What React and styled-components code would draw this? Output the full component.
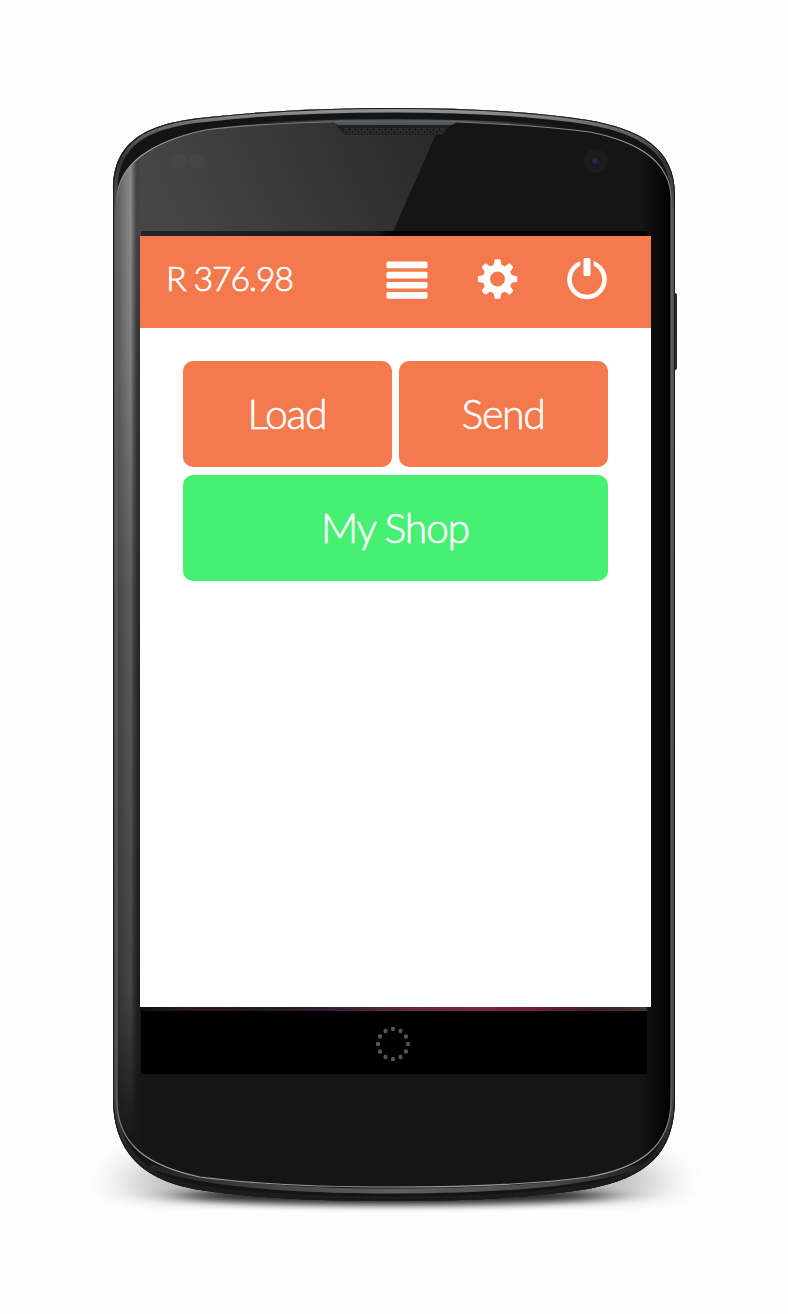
import React from 'react';
import styled, { createGlobalStyle } from 'styled-components';

const GlobalStyle = createGlobalStyle`
  * { box-sizing: border-box; }
  body { margin: 0; background: #fefefe; }
`;

const Stage = styled.main`
  position: relative;
  width: 788px;
  height: 1314px;
  padding: 231px 0 0 140px;
  overflow: hidden;
  font-family: Lato, 'Liberation Sans', sans-serif;
`;

const Device = styled.svg`
  position: absolute;
  inset: 0;
`;

const Screen = styled.section`
  position: relative;
  width: 511px;
  display: flex;
  flex-direction: column;
`;

const StatusBar = styled.div`
  height: 5px;
  width: 506px;
  margin-left: 1px;
  background: linear-gradient(90deg, #242424 0%, #161616 46%, #000 50%);
`;

const Header = styled.header`
  height: 92px;
  background: #f4794d;
  display: flex;
  align-items: center;
  justify-content: space-between;
  padding: 0 44px 6px 26px;
`;

const Balance = styled.div`
  padding-bottom: 2px;
  color: #fff;
  font-size: 34px;
  font-weight: 300;
  line-height: 40px;
  letter-spacing: -1.2px;
  -webkit-text-stroke: 0.7px #fff;
  white-space: nowrap;
`;

const Actions = styled.nav`
  display: flex;
  align-items: center;
  gap: 48.5px;
`;

const IconButton = styled.button`
  display: flex;
  padding: 0;
  border: 0;
  background: none;
`;

const Content = styled.div`
  height: 679px;
  padding: 33px 43px 0;
  background: #fff;
  display: grid;
  grid-template-columns: 1fr 1fr;
  grid-auto-rows: 105.5px;
  gap: 8.5px 7px;
  align-content: start;
`;

const Tile = styled.button`
  grid-column: ${(p) => (p.$wide ? 'span 2' : 'auto')};
  border: 0;
  border-radius: 10px;
  padding: 0 1px 0 0;
  background: ${(p) => (p.$wide ? '#47f073' : '#f4794d')};
  color: #fff;
  font-family: inherit;
  font-size: 41px;
  font-weight: 300;
  line-height: 48px;
  letter-spacing: -1.3px;
  -webkit-text-stroke: 0.6px #fff;
`;

const Wallpaper = styled.div`
  width: 507px;
  height: 4px;
  background: linear-gradient(90deg, #04141a 0%, #2b1a18 9%, #261a25 25%, #351e35 38%, #62283d 52%, #77283a 66%, #702335 77%, #451e27 88%, #403528 100%);
`;

const NavBar = styled.footer`
  width: 506px;
  height: 63px;
  margin-left: 1px;
  padding: 2px 2px 0 0;
  background: #000;
  display: flex;
  align-items: center;
  justify-content: center;
`;

const OUTER =
  'M113 190C113 140 148 124 200 118C260 111 325 108 394 108C463 108 530 111 588 120C640 129 675 148 675 195V1098C675 1155 645 1178 588 1189C530 1198 463 1201 394 1201C325 1201 260 1199 200 1190C150 1182 113 1158 113 1098Z';
const GLASS =
  'M117 199C118 165 150 142 205 130C240 125 285 123 330 122H458C510 124 550 127 590 132C640 142 671 162 671 199V1100C671 1147 640 1168 588 1177C530 1185 463 1187 394 1187C325 1187 260 1185 200 1177C148 1166 117 1145 117 1100Z';

function Phone() {
  return (
    <Device width="788" height="1314" viewBox="0 0 788 1314" fill="none" aria-hidden="true">
      <defs>
        <filter id="soft" filterUnits="userSpaceOnUse" x="20" y="1050" width="750" height="220">
          <feGaussianBlur stdDeviation="22 18" />
        </filter>
        <filter id="tight" filterUnits="userSpaceOnUse" x="20" y="1100" width="750" height="170">
          <feGaussianBlur stdDeviation="24 3.5" />
        </filter>
        <filter id="bevel" filterUnits="userSpaceOnUse" x="90" y="90" width="610" height="1130">
          <feGaussianBlur stdDeviation=".7" />
        </filter>
        <linearGradient id="floor" x1="0" y1="1194" x2="0" y2="1211" gradientUnits="userSpaceOnUse">
          <stop offset="0" stopColor="#fff" />
          <stop offset="1" stopColor="#000" />
        </linearGradient>
        <mask id="floorMask" maskUnits="userSpaceOnUse" x="0" y="1000" width="788" height="300">
          <rect y="1000" width="788" height="300" fill="url(#floor)" />
        </mask>
        <linearGradient id="band" x1="0" y1="108" x2="0" y2="1201" gradientUnits="userSpaceOnUse">
          <stop offset="0" stopColor="#999" />
          <stop offset=".015" stopColor="#6c6c6c" />
          <stop offset=".05" stopColor="#333" />
          <stop offset=".1" stopColor="#5a5a5a" />
          <stop offset=".9" stopColor="#4a4a4a" />
          <stop offset=".95" stopColor="#262626" />
          <stop offset="1" stopColor="#191919" />
        </linearGradient>
        <linearGradient id="lowerBand" x1="150" x2="640" y1="0" y2="0" gradientUnits="userSpaceOnUse">
          <stop offset="0" stopColor="#222" />
          <stop offset=".3" stopColor="#4a4b4c" />
          <stop offset=".5" stopColor="#5c5f61" />
          <stop offset=".8" stopColor="#4a4b4c" />
          <stop offset="1" stopColor="#222" />
        </linearGradient>
        <linearGradient id="upperBand" x1="250" x2="560" y1="0" y2="0" gradientUnits="userSpaceOnUse">
          <stop offset="0" stopColor="#50555a" stopOpacity="0" />
          <stop offset=".3" stopColor="#50555a" />
          <stop offset=".7" stopColor="#50555a" />
          <stop offset="1" stopColor="#50555a" stopOpacity="0" />
        </linearGradient>
        <linearGradient id="rim" x1="0" y1="120" x2="0" y2="1190" gradientUnits="userSpaceOnUse">
          <stop offset="0" stopColor="#70757b" />
          <stop offset=".03" stopColor="#aaa" />
          <stop offset=".08" stopColor="#666" />
          <stop offset=".9" stopColor="#5c5e60" />
          <stop offset=".97" stopColor="#999" />
          <stop offset="1" stopColor="#999" />
        </linearGradient>
        <linearGradient id="gloss" x1="430" y1="140" x2="180" y2="250" gradientUnits="userSpaceOnUse">
          <stop offset="0" stopColor="#2a2a2a" />
          <stop offset="1" stopColor="#464646" />
        </linearGradient>
        <linearGradient id="edge" x1="0" y1="200" x2="0" y2="1100" gradientUnits="userSpaceOnUse">
          <stop offset="0" stopColor="#464646" />
          <stop offset=".2" stopColor="#2e2e2e" />
          <stop offset="1" stopColor="#171717" />
        </linearGradient>
        <linearGradient id="side" x1="117" x2="140" y1="0" y2="0" gradientUnits="userSpaceOnUse">
          <stop offset="0" stopColor="#5c5c5c" />
          <stop offset=".25" stopColor="#737373" />
          <stop offset=".6" stopColor="#8c8c8c" />
          <stop offset=".85" stopColor="#444" stopOpacity=".6" />
          <stop offset="1" stopColor="#333" stopOpacity="0" />
        </linearGradient>
        <linearGradient id="sideFade" x1="0" y1="150" x2="0" y2="1140" gradientUnits="userSpaceOnUse">
          <stop offset="0" stopColor="#fff" />
          <stop offset=".2" stopColor="#ddd" />
          <stop offset=".45" stopColor="#888" />
          <stop offset=".85" stopColor="#606060" />
          <stop offset="1" stopColor="#000" />
        </linearGradient>
        <linearGradient id="right" x1="640" x2="671" y1="0" y2="0" gradientUnits="userSpaceOnUse">
          <stop offset="0" stopColor="#000" stopOpacity="0" />
          <stop offset="1" stopColor="#000" />
        </linearGradient>
        <pattern id="mesh" y="128" width="6" height="5.400" patternUnits="userSpaceOnUse">
          <rect width="6" height="5.400" fill="#2b2b2b" />
          <circle cx="1.500" cy="1.300" r=".9" fill="#0c0c0c" />
          <circle cx="4.500" cy="4" r=".9" fill="#0c0c0c" />
        </pattern>
        <mask id="fade" maskUnits="userSpaceOnUse" x="110" y="100" width="40" height="1110">
          <rect x="110" y="100" width="40" height="1110" fill="url(#sideFade)" />
        </mask>
        <clipPath id="bodyClip"><path d={OUTER} /></clipPath>
        <clipPath id="glassClip"><path d={GLASS} /></clipPath>
      </defs>
      <g mask="url(#floorMask)">
        <ellipse cx="394" cy="1182" rx="275" ry="26" fill="#000" opacity=".4" filter="url(#soft)" />
      </g>
      <ellipse cx="394" cy="1196" rx="215" ry="9" fill="#000" opacity=".8" filter="url(#tight)" />
      <rect x="673" y="293" width="4" height="77" rx="2" fill="#292929" />
      <path d={OUTER} fill="#141414" />
      <g clipPath="url(#bodyClip)">
        <path d={OUTER} stroke="url(#band)" strokeWidth="9" filter="url(#bevel)" />
        <path d={OUTER} stroke="#1c1c1c" strokeWidth="2.200" />
        <path d="M150 1166C200 1184 290 1191 394 1191C500 1191 590 1184 640 1166" stroke="url(#lowerBand)" strokeWidth="5" filter="url(#bevel)" />
      </g>
      <path d="M250 124.500C310 120.500 350 120.500 394 120.500C450 120.500 500 121.500 560 127" stroke="url(#upperBand)" strokeWidth="2.600" />
      <path d={GLASS} fill="#151515" />
      <g clipPath="url(#glassClip)">
        <path d="M110 100H451L391 236H110Z" fill="url(#gloss)" />
        <path d="M117 236H141V1190H117Z" fill="url(#edge)" />
        <path d="M117 130H140V1190H117Z" fill="url(#side)" mask="url(#fade)" />
        <path d="M640 120H672V1190H640Z" fill="url(#right)" />
      </g>
      <path d={GLASS} stroke="url(#rim)" strokeWidth="1.200" />
      <path d="M331 122H458Q452 123 448 128L443 135H345L338 127Q335 123 331 122Z" fill="#1d1e1f" />
      <path d="M332 122H457L452 125H338Z" fill="#50565d" />
      <path d="M341 128H447L442 134.500H346Z" fill="url(#mesh)" />
      <circle cx="178.500" cy="161" r="8" fill="#505050" opacity=".3" />
      <circle cx="197" cy="161" r="8" fill="#505050" opacity=".3" />
      <circle cx="595.500" cy="161" r="12" fill="#1c1c1d" />
      <circle cx="595.500" cy="161" r="6" fill="#1a1a22" />
      <circle cx="595" cy="161" r="2.500" fill="#29284a" />
    </Device>
  );
}

function MenuIcon() {
  return (
    <svg width="42" height="40" viewBox="0 0 42 40" fill="#fff">
      {[2.5, 12.7, 22.9, 33.1].map((y) => (
        <rect key={y} x=".5" y={y} width="41" height="6.7" rx="1.5" />
      ))}
    </svg>
  );
}

function GearIcon() {
  return (
    <svg width="42" height="40" viewBox="-20.5 -20 42 40">
      <g fill="#fff">
        <path fillRule="evenodd" d="M0-14.500A14.500 14.500 0 1 1 0 14.500A14.500 14.500 0 1 1 0-14.500ZM0-7.500A7.500 7.500 0 1 0 0 7.500A7.500 7.500 0 1 0 0-7.500Z" />
        {[0, 45, 90, 135, 180, 225, 270, 315].map((a) => (
          <path key={a} transform={`rotate(${a})`} d="M-4.500-13Q-3.400-15-3-18.700Q-2.800-19.700-1.800-19.700H1.800Q2.800-19.700 3-18.700Q3.400-15 4.500-13Z" />
        ))}
      </g>
    </svg>
  );
}

function PowerIcon() {
  return (
    <svg width="40" height="42" viewBox="-20 -21.5 40 42" fill="#fff">
      <path d="M-6.700-18.600A19.800 19.800 0 1 0 6.700-18.600V-13.700A15.200 15.200 0 1 1-6.700-13.700Z" />
      <rect x="-3.500" y="-21.500" width="7" height="18" rx="1.500" />
    </svg>
  );
}

function HomeDots() {
  return (
    <svg width="36" height="36" viewBox="-18 -18 36 36" fill="#555">
      {Array.from({ length: 12 }, (_, i) => (
        <circle key={i} cx={15 * Math.sin((i * Math.PI) / 6)} cy={-15 * Math.cos((i * Math.PI) / 6)} r="2.200" />
      ))}
    </svg>
  );
}

export default function App() {
  return (
    <>
      <GlobalStyle />
      <Stage>
        <Phone />
        <Screen>
          <StatusBar />
          <Header>
            <Balance>R 376.98</Balance>
            <Actions>
              <IconButton aria-label="Menu"><MenuIcon /></IconButton>
              <IconButton aria-label="Settings"><GearIcon /></IconButton>
              <IconButton aria-label="Log out"><PowerIcon /></IconButton>
            </Actions>
          </Header>
          <Content>
            <Tile>Load</Tile>
            <Tile>Send</Tile>
            <Tile $wide>My Shop</Tile>
          </Content>
          <Wallpaper />
          <NavBar><HomeDots /></NavBar>
        </Screen>
      </Stage>
    </>
  );
}
